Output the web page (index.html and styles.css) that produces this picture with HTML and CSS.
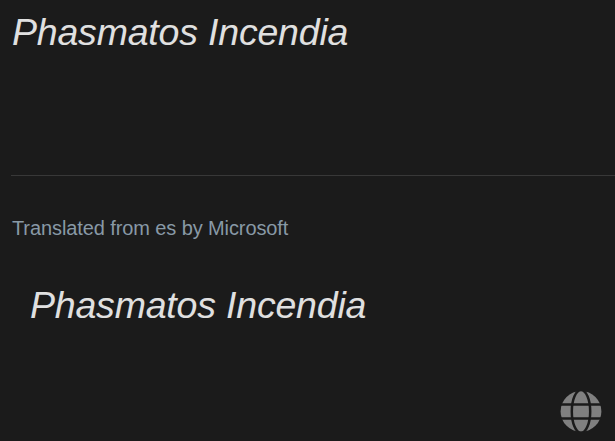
FILE: index.html
```
<!DOCTYPE html>
<html lang="en">
<head>
  <meta charset="UTF-8">
  <title>Translation</title>
  <link rel="stylesheet" href="styles.css">
</head>
<body>

  <div class="original">Phasmatos Incendia</div>

  <div class="translation">
    <p class="source">Translated from es by Microsoft</p>
    <p class="result">Phasmatos Incendia</p>
  </div>

  <footer>
    <svg class="globe" viewBox="0 0 42 42">
      <circle cx="21" cy="21.4" r="20.4" fill="#808080"/>
      <g fill="none" stroke="#1b1b1b" stroke-width="2.5">
        <ellipse cx="21" cy="21.4" rx="9.2" ry="21.4"/>
        <path d="M0 14.6h42M0 28.6h42"/>
      </g>
    </svg>
  </footer>

</body>
</html>
```

FILE: styles.css
```
* { box-sizing: border-box; }
body {
  display: flex;
  flex-direction: column;
  height: 441px;
  margin: 0;
  background-color: #1b1b1b;
  color: #e0e0e0;
  font-family: "Liberation Sans", Arial, sans-serif;
  overflow: hidden;
}
p { margin: 0; }
.original {
  height: 175px;
  padding: 10px 12px;
  font-size: 37.5px;
  font-style: italic;
  letter-spacing: -0.2px;
  line-height: 44px;
}
.translation {
  margin-left: 11px;
  padding-top: 40px;
  border-top: 1px solid #383838;
}
.source {
  padding-left: 1px;
  color: #8899a6;
  font-size: 20px;
  letter-spacing: -0.1px;
  line-height: 24px;
}
.result {
  padding: 43px 19px 0;
  font-size: 37.5px;
  font-style: italic;
  letter-spacing: -0.2px;
  line-height: 44px;
}
footer {
  display: flex;
  justify-content: flex-end;
  margin-top: auto;
  padding: 0 13px 9px;
}
.globe { width: 42px; height: 42px; }
```
